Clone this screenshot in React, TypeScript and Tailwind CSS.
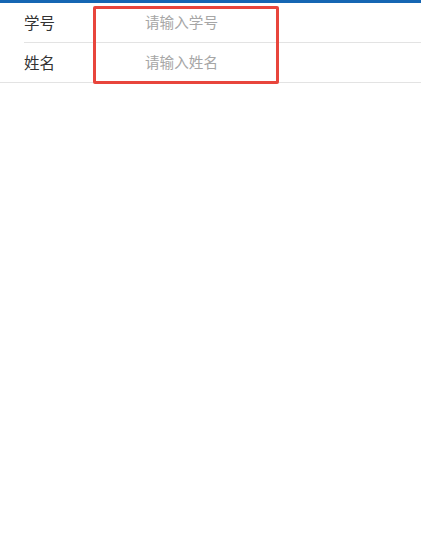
const FIELDS = [
  { label: "学号", placeholder: "请输入学号", h: "h-[40px]" },
  { label: "姓名", placeholder: "请输入姓名", h: "h-[39px]" },
];

export default function App() {
  return (
    <div
      className="relative h-[550px] w-full bg-white"
      style={{ fontFamily: '"Noto Sans CJK SC", "Noto Sans", sans-serif' }}
    >
      <div className="h-[3px] bg-[#1666b3]" />
      <div className="border-b border-[#e3e3e3]">
        {FIELDS.map((f, i) => (
          <div key={f.label} className="pl-6">
            <div
              className={
                "flex items-center pr-6 " +
                f.h +
                (i === 0 ? " border-b border-[#e3e3e3]" : "")
              }
            >
              <span className="w-[121px] shrink-0 text-[15.5px] leading-none text-[#333]">
                {f.label}
              </span>
              <span className="text-[14.6px] leading-none text-[#a6a6a6]">
                {f.placeholder}
              </span>
            </div>
          </div>
        ))}
      </div>
      {/* highlight around the input column */}
      <div className="pointer-events-none absolute left-[93px] top-[6px] h-[78px] w-[186px] rounded-[2px] border-[3px] border-[#e8453c]" />
    </div>
  );
}
